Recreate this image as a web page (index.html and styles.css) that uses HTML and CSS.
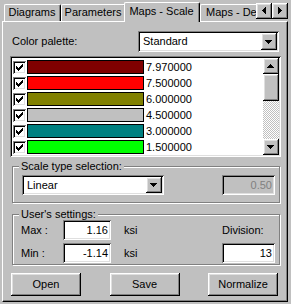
FILE: index.html
```html
<!DOCTYPE html>
<html lang="en">
<head>
  <meta charset="UTF-8">
  <title>Maps - Scale</title>
  <link rel="stylesheet" href="styles.css">
</head>
<body>
  <div class="tabs">
    <div class="tab-strip">
      <div class="tab tab-diagrams">Diagrams</div>
      <div class="tab tab-parameters">Parameters</div>
      <div class="tab tab-scale active">Maps - Scale</div>
      <div class="tab tab-deform">Maps - Deformation</div>
    </div>
    <div class="tab-scroll">
      <span class="arrow-btn raised">
        <svg width="16" height="16" viewBox="0 0 16 16"><path d="M9 4h1v7h-1z M8 5h1v5h-1z M7 6h1v3h-1z M6 7h1v1h-1z"/></svg>
      </span>
      <span class="arrow-btn raised">
        <svg width="16" height="16" viewBox="0 0 16 16"><path d="M6 4h1v7h-1z M7 5h1v5h-1z M8 6h1v3h-1z M9 7h1v1h-1z"/></svg>
      </span>
    </div>
  </div>

  <div class="panel">
    <div class="palette-row">
      <label>Color palette:</label>
      <div class="combo palette-combo sunken">
        <span class="combo-text">Standard</span>
        <span class="combo-btn raised">
          <svg width="16" height="17" viewBox="0 0 16 17"><path d="M4 7h7v1h-7z M5 8h5v1h-5z M6 9h3v1h-3z M7 10h1v1h-1z"/></svg>
        </span>
      </div>
    </div>

    <div class="listbox sunken">
      <ul class="items">
        <li class="item"><span class="check sunken"><svg width="13" height="13" viewBox="0 0 13 13"><path d="M9 3h1v3h-1z M8 4h1v3h-1z M7 5h1v3h-1z M6 6h1v3h-1z M5 7h1v3h-1z M4 6h1v3h-1z M3 5h1v3h-1z"/></svg></span><span class="swatch" style="background:#800000"></span><span class="value">7.970000</span></li>
        <li class="item"><span class="check sunken"><svg width="13" height="13" viewBox="0 0 13 13"><path d="M9 3h1v3h-1z M8 4h1v3h-1z M7 5h1v3h-1z M6 6h1v3h-1z M5 7h1v3h-1z M4 6h1v3h-1z M3 5h1v3h-1z"/></svg></span><span class="swatch" style="background:#ff0000"></span><span class="value">7.500000</span></li>
        <li class="item"><span class="check sunken"><svg width="13" height="13" viewBox="0 0 13 13"><path d="M9 3h1v3h-1z M8 4h1v3h-1z M7 5h1v3h-1z M6 6h1v3h-1z M5 7h1v3h-1z M4 6h1v3h-1z M3 5h1v3h-1z"/></svg></span><span class="swatch" style="background:#808000"></span><span class="value">6.000000</span></li>
        <li class="item"><span class="check sunken"><svg width="13" height="13" viewBox="0 0 13 13"><path d="M9 3h1v3h-1z M8 4h1v3h-1z M7 5h1v3h-1z M6 6h1v3h-1z M5 7h1v3h-1z M4 6h1v3h-1z M3 5h1v3h-1z"/></svg></span><span class="swatch" style="background:#c0c0c0"></span><span class="value">4.500000</span></li>
        <li class="item"><span class="check sunken"><svg width="13" height="13" viewBox="0 0 13 13"><path d="M9 3h1v3h-1z M8 4h1v3h-1z M7 5h1v3h-1z M6 6h1v3h-1z M5 7h1v3h-1z M4 6h1v3h-1z M3 5h1v3h-1z"/></svg></span><span class="swatch" style="background:#008080"></span><span class="value">3.000000</span></li>
        <li class="item"><span class="check sunken"><svg width="13" height="13" viewBox="0 0 13 13"><path d="M9 3h1v3h-1z M8 4h1v3h-1z M7 5h1v3h-1z M6 6h1v3h-1z M5 7h1v3h-1z M4 6h1v3h-1z M3 5h1v3h-1z"/></svg></span><span class="swatch" style="background:#00ff00"></span><span class="value">1.500000</span></li>
      </ul>
      <div class="vscroll">
        <span class="sb-btn raised"><svg width="16" height="16" viewBox="0 0 16 16"><path d="M7 6h1v1h-1z M6 7h3v1h-3z M5 8h5v1h-5z M4 9h7v1h-7z"/></svg></span>
        <span class="sb-thumb raised"></span>
        <span class="sb-track"></span>
        <span class="sb-btn raised"><svg width="16" height="16" viewBox="0 0 16 16"><path d="M4 6h7v1h-7z M5 7h5v1h-5z M6 8h3v1h-3z M7 9h1v1h-1z"/></svg></span>
      </div>
    </div>

    <div class="group scale-group">
      <div class="group-title">Scale type selection:</div>
      <div class="scale-row">
        <div class="combo scale-combo sunken">
          <span class="combo-text">Linear</span>
          <span class="combo-btn raised">
            <svg width="16" height="16" viewBox="0 0 16 16"><path d="M4 6h7v1h-7z M5 7h5v1h-5z M6 8h3v1h-3z M7 9h1v1h-1z"/></svg>
          </span>
        </div>
        <div class="field sunken disabled">0.50</div>
      </div>
    </div>

    <div class="group settings-group">
      <div class="group-title">User's settings:</div>
      <div class="settings">
        <span>Max :</span>
        <div class="field sunken">1.16</div>
        <span class="unit">ksi</span>
        <span></span>
        <span>Division:</span>
        <span>Min :</span>
        <div class="field sunken">-1.14</div>
        <span class="unit">ksi</span>
        <span></span>
        <div class="field sunken">13</div>
      </div>
    </div>

    <div class="actions">
      <span class="button raised">Open</span>
      <span class="button raised">Save</span>
      <span class="button raised">Normalize</span>
    </div>
  </div>
</body>
</html>
```

FILE: styles.css
```css
* {
  box-sizing: border-box;
}
body {
  margin: 0;
  width: 291px;
  height: 304px;
  overflow: hidden;
  background: #c0c0c0;
  color: #000;
  font: 11px/13px "Liberation Sans", Arial, sans-serif;
}
svg {
  display: block;
  fill: #000;
  shape-rendering: crispEdges;
}
.raised {
  background: #c0c0c0;
  box-shadow: inset -1px -1px #000, inset 1px 1px #fff, inset -2px -2px #808080, inset 2px 2px #dfdfdf;
}
.sunken {
  background: #fff;
  box-shadow: inset 1px 1px #808080, inset -1px -1px #fff, inset 2px 2px #000, inset -2px -2px #dfdfdf;
}

/* tab header */
.tabs {
  position: relative;
  z-index: 1;
  display: flex;
  height: 22px;
  padding-left: 4px;
}
.tab-strip {
  flex: 1;
  display: flex;
  align-items: flex-end;
  overflow: hidden;
}
.tab {
  flex: none;
  height: 17px;
  margin-bottom: 1px;
  padding: 1px 1px 0 0;
  border: 1px solid #fff;
  border-right-color: #000;
  border-bottom: 0;
  border-radius: 2px 2px 0 0;
  box-shadow: inset -1px 0 #808080;
  background: #c0c0c0;
  white-space: nowrap;
  text-align: center;
}
.tab-diagrams { width: 57px; }
.tab-parameters { width: 65px; }
.tab-scale { width: 76px; }
.tab-deform { padding-left: 5px; }
.tab.active {
  position: relative;
  z-index: 1;
  height: 20px;
  margin: 0 0 0 -2px;
  padding-top: 2px;
}
.tab-scroll {
  display: flex;
  margin: 3px 3px 0 0;
}
.arrow-btn {
  width: 16px;
  height: 16px;
}

/* page body */
.panel {
  height: 281px;
  margin: -1px 3px 0 2px;
  padding: 9px 6px 0 7px;
  border-top: 1px solid #fff;
  border-left: 1px solid #fff;
  border-right: 1px solid #000;
  border-bottom: 1px solid #000;
  box-shadow: inset -1px -1px #808080;
}
.palette-row {
  display: flex;
  justify-content: space-between;
  align-items: center;
  height: 21px;
}
.palette-row label {
  margin-left: 2px;
}
.combo {
  display: flex;
  padding: 2px;
}
.combo-text {
  flex: 1;
  padding-left: 3px;
  line-height: 17px;
}
.combo-btn {
  width: 16px;
}
.palette-combo {
  width: 141px;
  height: 21px;
  margin-right: 2px;
}

/* colour list */
.listbox {
  display: flex;
  height: 101px;
  margin-top: 4px;
  padding: 2px;
}
.items {
  flex: 1;
  list-style: none;
  margin: 0;
  padding: 1px 0 0 1px;
}
.item {
  display: flex;
  align-items: center;
  height: 16px;
}
.check {
  width: 13px;
  height: 13px;
}
.swatch {
  width: 117px;
  height: 14px;
  margin-left: 1px;
  border: 1px solid #000;
}
.value {
  margin-left: 2px;
}
.vscroll {
  display: flex;
  flex-direction: column;
  width: 16px;
}
.sb-btn {
  height: 16px;
}
.sb-thumb {
  height: 27px;
}
.sb-track {
  flex: 1;
  background: repeating-conic-gradient(#fff 0 25%, #c0c0c0 0 50%) 0 0 / 2px 2px;
}

/* group boxes */
.group {
  margin: 9px 1px 0 2px;
  border: 1px solid #808080;
  box-shadow: inset 1px 1px #fff, 1px 1px #fff;
}
.settings-group {
  margin-top: 11px;
}
.group-title {
  display: table;
  margin: -7px 0 0 6px;
  padding: 0 2px;
  background: #c0c0c0;
}
.scale-row {
  display: flex;
  justify-content: space-between;
  margin-top: 2px;
  padding: 0 4px 7px 9px;
}
.scale-combo {
  width: 142px;
  height: 20px;
}
.scale-combo .combo-text {
  line-height: 16px;
}
.field {
  height: 20px;
  padding: 0 3px;
  line-height: 20px;
  text-align: right;
}
.field.disabled {
  width: 53px;
  background: #c0c0c0;
  color: #808080;
}
.settings {
  display: grid;
  grid-template-columns: 42px 48px auto 1fr 53px;
  grid-template-rows: 20px 20px;
  row-gap: 3px;
  align-items: center;
  margin-top: -1px;
  padding: 0 4px 1px 8px;
}
.unit {
  margin-left: 13px;
}

/* bottom buttons */
.actions {
  display: flex;
  justify-content: space-between;
  margin: 8px 3px 0 1px;
}
.button {
  width: 70px;
  height: 23px;
  line-height: 23px;
  text-align: center;
}
```
